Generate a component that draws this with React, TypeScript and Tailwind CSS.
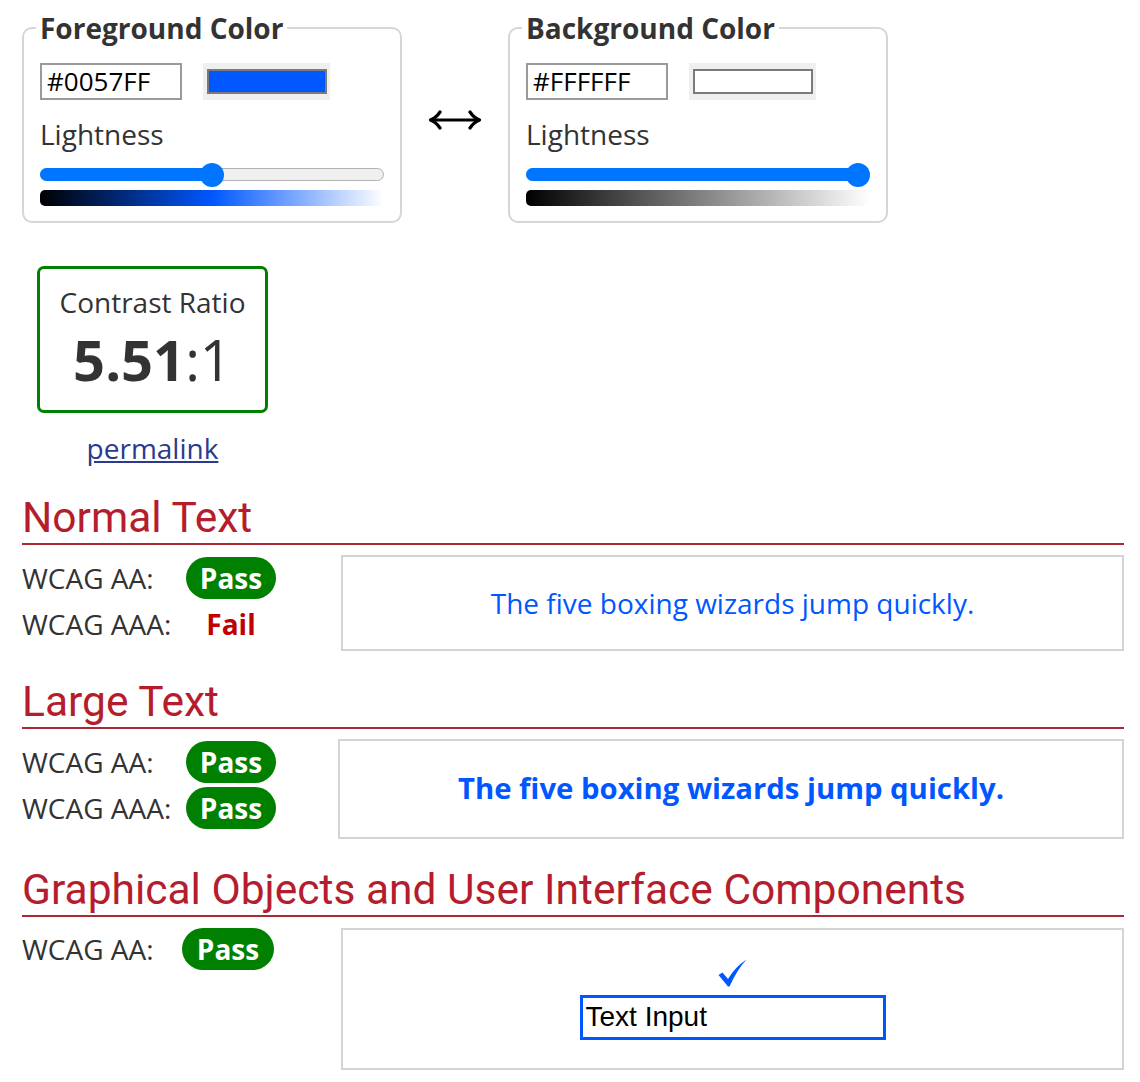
import React from "react";

const FONT = "font-['Open_Sans',_'DejaVu_Sans',_sans-serif]";
const HEAD = "font-['Roboto',_'Liberation_Sans',_sans-serif]";

function ColorPicker({
  title,
  hex,
  swatch,
  pct,
  gradient,
}: {
  title: string;
  hex: string;
  swatch: string;
  pct: number;
  gradient: string;
}) {
  const thumbLeft = (344 - 24) * (pct / 100);
  return (
    <fieldset className="w-[380px] rounded-[10px] border-2 border-[#d6d6d6] px-[16px] pb-[15px] pt-0">
      <legend className="-ml-[4px] px-[4px] text-[28px] font-bold text-[#333]">{title}</legend>
      <div className="mt-[14px] flex items-center gap-[21px]">
        <div className="flex h-[37px] w-[142px] items-center border-2 border-[#9a9a9a] pl-[5px] text-[26px] text-black">
          {hex}
        </div>
        <div className="flex h-[37px] w-[127px] items-center justify-center bg-[#efefef]">
          <div className="h-[25px] w-[120px] border-2 border-[#7a7a7a]" style={{ background: swatch }} />
        </div>
      </div>
      <div className="mt-[15px] text-[28px] leading-[38px] text-[#333]">Lightness</div>
      {/* slider */}
      <div className="relative mt-[10px] h-[24px] w-[344px]">
        <div className="absolute left-0 right-0 top-[5px] h-[13px] rounded-full border border-[#b2b2b2] bg-[#efefef]" />
        <div
          className="absolute left-0 top-[5px] h-[13px] rounded-full bg-[#0075ff]"
          style={{ width: thumbLeft + 12 }}
        />
        <div
          className="absolute top-0 h-[24px] w-[24px] rounded-full bg-[#0075ff]"
          style={{ left: thumbLeft }}
        />
      </div>
      <div className="mt-[3px] h-[16px] rounded-l-[5px]" style={{ background: gradient }} />
    </fieldset>
  );
}

function Badge({ pass }: { pass: boolean }) {
  if (!pass) {
    return <span className="text-[28px] font-bold text-[#c00000]">Fail</span>;
  }
  return (
    <span className="flex h-[42px] w-full items-center justify-center rounded-full bg-[#008000] text-[28px] font-bold text-white">
      Pass
    </span>
  );
}

function Heading({ children }: { children: React.ReactNode }) {
  return (
    <h2
      className={`${HEAD} border-b-2 border-[#a92a36] pb-[1px] text-[42.5px] leading-[49px] text-[#b51d2d]`}
    >
      {children}
    </h2>
  );
}

function Row({ label, pass, labelW }: { label: string; pass: boolean; labelW: string }) {
  return (
    <div className="flex h-[46px] items-center">
      <div className={`${labelW} text-[28px] text-[#333]`}>{label}</div>
      <div className="flex w-[90px] justify-center">
        <Badge pass={pass} />
      </div>
    </div>
  );
}

export default function App() {
  return (
    <div className={`${FONT} w-[1124px] pl-[22px] pt-[7px] text-[#333]`}>
      <div className="flex items-start">
        <ColorPicker
          title="Foreground Color"
          hex="#0057FF"
          swatch="#0057FF"
          pct={50}
          gradient="linear-gradient(to right, #000000, #0057FF 50%, #ffffff)"
        />
        <div className="flex w-[106px] justify-center pt-[103px]">
          <svg width="54" height="20" viewBox="0 0 54 20" fill="none" stroke="#000" strokeWidth="3.2" strokeLinecap="round" strokeLinejoin="round">
            <path d="M3 10 H51" />
            <path d="M12 2 Q8 8 2.5 10 Q8 12 12 18" />
            <path d="M42 2 Q46 8 51.5 10 Q46 12 42 18" />
          </svg>
        </div>
        <ColorPicker
          title="Background Color"
          hex="#FFFFFF"
          swatch="#FFFFFF"
          pct={100}
          gradient="linear-gradient(to right, #000000, #ffffff)"
        />
      </div>

      <div className="ml-[15px] mt-[43px] w-[231px]">
        <div className="rounded-[7px] border-[3px] border-[#008000] pb-[13px] pt-[14px] text-center">
          <div className="text-[28px] leading-[38px]">Contrast Ratio</div>
          <div className="text-[56px] leading-[76px]">
            <span className="font-bold">5.51</span>:1
          </div>
        </div>
        <div className="mt-[16px] text-center text-[28px] leading-[38px]">
          <a href="#" className="text-[#2b3a8f] underline">
            permalink
          </a>
        </div>
      </div>

      <div className="mt-[26px]">
        <Heading>Normal Text</Heading>
        <div className="mt-[10px] flex">
          <div className="w-[319px]">
            <Row label="WCAG AA:" pass labelW="w-[164px]" />
            <Row label="WCAG AAA:" pass={false} labelW="w-[164px]" />
          </div>
          <div className="flex h-[96px] flex-1 items-center justify-center border-2 border-[#d4d4d4] text-[28px] text-[#0057FF]">
            The five boxing wizards jump quickly.
          </div>
        </div>
      </div>

      <div className="mt-[26px]">
        <Heading>Large Text</Heading>
        <div className="mt-[10px] flex">
          <div className="w-[316px]">
            <Row label="WCAG AA:" pass labelW="w-[164px]" />
            <Row label="WCAG AAA:" pass labelW="w-[164px]" />
          </div>
          <div className="flex h-[100px] flex-1 items-center justify-center border-2 border-[#d4d4d4] text-[29.3px] font-bold text-[#0057FF]">
            The five boxing wizards jump quickly.
          </div>
        </div>
      </div>

      <div className="mt-[26px]">
        <Heading>Graphical Objects and User Interface Components</Heading>
        <div className="mt-[11px] flex">
          <div className="w-[319px]">
            <div className="flex h-[42px] items-center">
              <div className="w-[160px] text-[28px] text-[#333]">WCAG AA:</div>
              <div className="flex w-[92px] justify-center">
                <Badge pass />
              </div>
            </div>
          </div>
          <div className="flex h-[142px] flex-1 flex-col items-center justify-center border-2 border-[#d4d4d4]">
            <svg width="29" height="28" viewBox="0 0 29 28" className="ml-[-1px]">
              <path d="M0.5 16 L4.5 13.5 L10 20 Q17 8 28.5 0.5 Q19.5 10 11.5 27.5 L10 27.5 Z" fill="#0057FF" />
            </svg>
            <div className="mt-[8px] flex h-[45px] w-[306px] items-center border-[3px] border-[#0057FF] pl-[3px] font-['Liberation_Sans',_Arial,_sans-serif] text-[28px] text-black">
              Text Input
            </div>
          </div>
        </div>
      </div>
    </div>
  );
}
